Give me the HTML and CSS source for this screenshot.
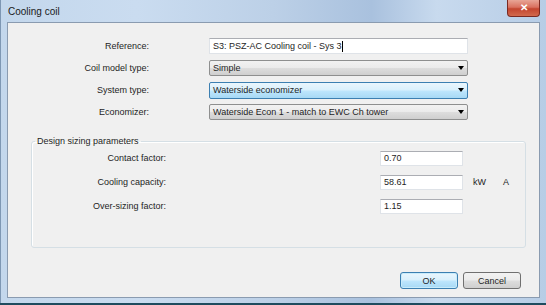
FILE: index.html
```html
<!DOCTYPE html>
<html lang="en">
<head>
    <meta charset="UTF-8">
    <title>Cooling coil</title>
    <link rel="stylesheet" href="styles.css">
</head>
<body>
    <div class="window">
        <div class="titlebar">
            <span class="title">Cooling coil</span>
            <div class="close">&#x2715;</div>
        </div>
        <div class="client">
            <div class="form">
                <label>Reference:</label>
                <div class="textbox">S3: PSZ-AC Cooling coil - Sys 3<span class="caret"></span></div>
                <label>Coil model type:</label>
                <div class="combo">Simple<span class="arrow"></span></div>
                <label>System type:</label>
                <div class="combo hot">Waterside economizer<span class="arrow"></span></div>
                <label>Economizer:</label>
                <div class="combo">Waterside Econ 1 - match to EWC Ch tower<span class="arrow"></span></div>
            </div>

            <fieldset class="group">
                <legend>Design sizing parameters</legend>
                <div class="params">
                    <label>Contact factor:</label>
                    <div class="textbox small">0.70</div>
                    <span></span><span></span>
                    <label>Cooling capacity:</label>
                    <div class="textbox small">58.61</div>
                    <span class="unit">kW</span><span class="unit">A</span>
                    <label>Over-sizing factor:</label>
                    <div class="textbox small">1.15</div>
                    <span></span><span></span>
                </div>
            </fieldset>

            <div class="buttons">
                <button class="btn default">OK</button>
                <button class="btn">Cancel</button>
            </div>
        </div>
    </div>
</body>
</html>
```

FILE: styles.css
```css
body {
    margin: 0;
    font-family: "Liberation Sans", Arial, sans-serif;
    font-size: 9px;
    color: #1e1e1e;
    background: #1f4b5e;
}
.window {
    width: 546px;
    height: 303px;
    box-sizing: border-box;
    padding: 0 6px 5px 6px;
    border-left: 1px solid #7e97b3;
    background: linear-gradient(90deg, #c3d7ec 0%, #cadcf0 25%, #bcd0e7 50%, #a9c1de 68%, #c8daee 80%, #b7cde6 100%);
}
.titlebar {
    height: 22px;
    display: flex;
    justify-content: space-between;
    align-items: flex-start;
}
.title {
    margin: 6px 0 0 1px;
    font-size: 10px;
    color: #1a1a1a;
}
.close {
    width: 33px;
    height: 17px;
    box-sizing: border-box;
    border: 1px solid #7a2a22;
    border-top: none;
    border-radius: 0 0 4px 4px;
    background: linear-gradient(#e8a596 0%, #d9715f 45%, #c3452f 55%, #d26a4e 100%);
    color: #fff;
    font-size: 10px;
    font-weight: bold;
    text-align: center;
    line-height: 15px;
}
.client {
    height: 276px;
    box-sizing: border-box;
    border: 1px solid #8a9bb0;
    background: #f0f0f0;
    display: flex;
    flex-direction: column;
}
.form {
    display: grid;
    grid-template-columns: 141px 259px;
    column-gap: 60px;
    row-gap: 6px;
    grid-auto-rows: 16px;
    padding-top: 15px;
    align-items: center;
}
label {
    text-align: right;
}
.textbox {
    height: 16px;
    box-sizing: border-box;
    background: #fff;
    border: 1px solid #dfe3e8;
    border-top-color: #abadb3;
    padding: 0 3px;
    line-height: 14px;
    display: flex;
    align-items: center;
}
.caret {
    width: 1px;
    height: 11px;
    background: #000;
}
.combo {
    position: relative;
    height: 16px;
    box-sizing: border-box;
    border: 1px solid #8e8f8f;
    border-radius: 2px;
    background: linear-gradient(#f2f2f2 0%, #ebebeb 48%, #dddddd 52%, #cfcfcf 100%);
    padding: 0 3px;
    line-height: 14px;
}
.combo.hot {
    height: 17px;
    border-color: #3c7fb1;
    background: linear-gradient(#eaf6fd 0%, #d9f0fc 48%, #bee6fd 52%, #a7d9f5 100%);
    line-height: 15px;
}
.arrow {
    position: absolute;
    right: 3px;
    top: 50%;
    margin-top: -2px;
    border-left: 3px solid transparent;
    border-right: 3px solid transparent;
    border-top: 4px solid #000;
}
.group {
    margin: 16px 13px 0 23px;
    padding: 4px 0 0 0;
    height: 112px;
    box-sizing: border-box;
    border: 1px solid #d5dfe5;
    border-radius: 3px;
    box-shadow: inset 1px 1px 0 #fff;
}
.group legend {
    padding: 0 2px;
    margin-left: 3px;
}
.params {
    display: grid;
    grid-template-columns: 134px 214px 83px 40px 10px;
    grid-auto-rows: 16px;
    row-gap: 8px;
    align-items: center;
}
.params label {
    grid-column: 1;
}
.params .textbox {
    grid-column: 3;
    height: 15px;
}
.unit {
    padding-left: 10px;
}
.unit + .unit {
    padding-left: 0;
}
.buttons {
    margin-top: auto;
    padding: 0 18px 8px 0;
    display: flex;
    justify-content: flex-end;
    gap: 5px;
}
.btn {
    width: 58px;
    height: 17px;
    padding: 0;
    font-family: inherit;
    font-size: 9px;
    color: #1e1e1e;
    border: 1px solid #707070;
    border-radius: 3px;
    background: linear-gradient(#f2f2f2 0%, #ebebeb 48%, #dddddd 52%, #cfcfcf 100%);
}
.btn.default {
    border-color: #3c7fb1;
    box-shadow: inset 0 0 0 1px #c9ecfb;
    background: linear-gradient(#eaf6fd 0%, #d9f0fc 48%, #bee6fd 52%, #a7d9f5 100%);
}
```
